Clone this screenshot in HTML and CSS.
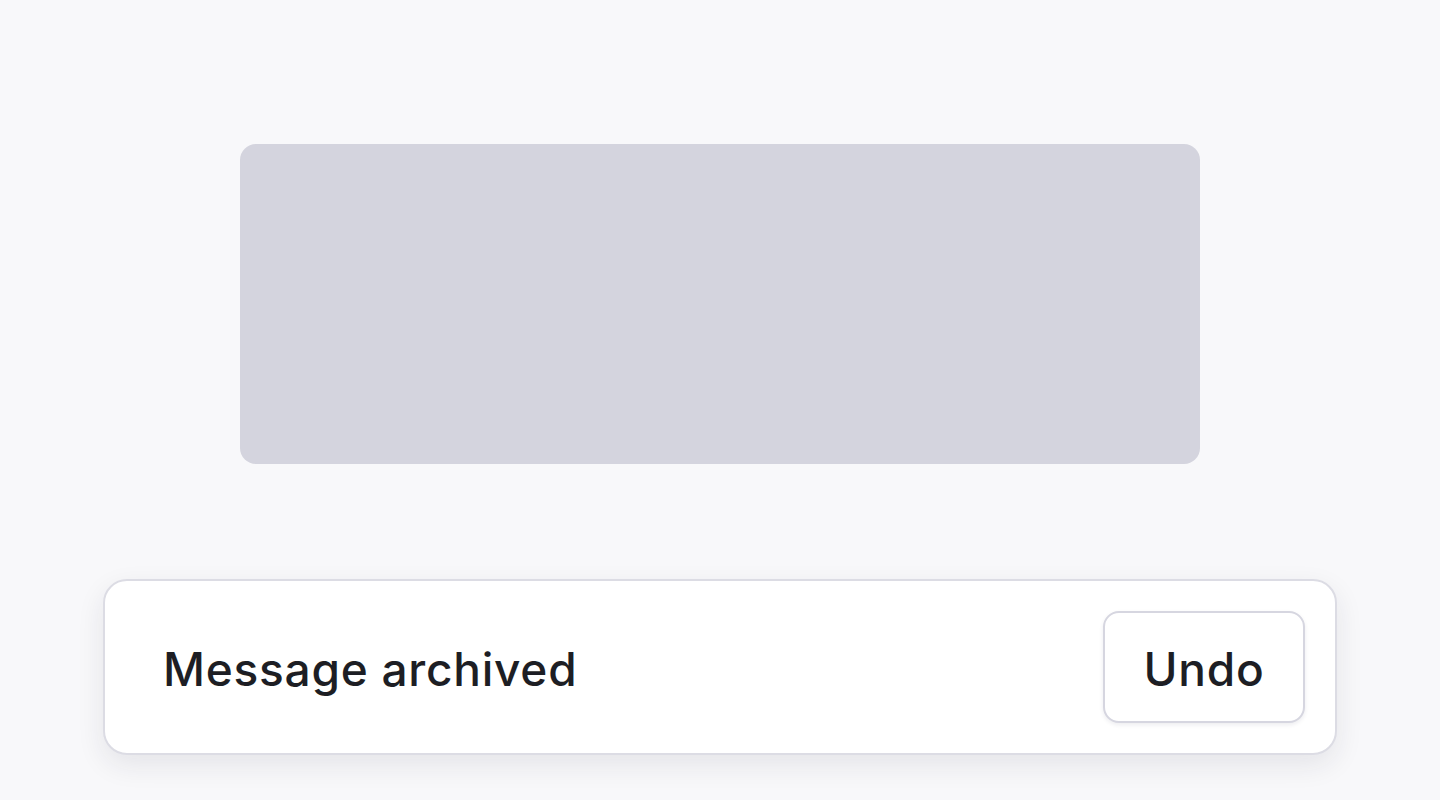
FILE: index.html
```html
<!DOCTYPE html>
<html lang="en">
<head>
<meta charset="utf-8">
<title>Toast</title>
<link rel="stylesheet" href="styles.css">
</head>
<body>
<main class="page">
  <div class="placeholder"></div>
  <div class="toast" role="status">
    <span class="toast-text">Message archived</span>
    <button class="undo" type="button">Undo</button>
  </div>
</main>
</body>
</html>
```
FILE: styles.css
```css
* { box-sizing: border-box; }
html, body {
  margin: 0;
  height: 100%;
  background: #f8f8fa;
  font-family: Inter, "Noto Sans", sans-serif;
}
.page {
  display: flex;
  flex-direction: column;
  align-items: center;
  padding-top: 144px;
}
.placeholder {
  width: 960px;
  height: 320px;
  background: #d4d4de;
  border-radius: 16px;
}
.toast {
  margin-top: 115px;
  width: 1234px;
  height: 176px;
  background: #ffffff;
  border: 2px solid #dcdce4;
  border-radius: 24px;
  box-shadow: 0 10px 28px rgba(30, 30, 60, 0.09);
  display: flex;
  align-items: center;
  justify-content: space-between;
  padding: 30px 30px 30px 58px;
}
.toast-text {
  font-size: 46px;
  font-weight: 500;
  letter-spacing: 0.75px;
  color: #1d1e24;
  line-height: 1;
  padding-top: 4px;
}
.undo {
  width: 202px;
  height: 112px;
  background: #ffffff;
  border: 2px solid #d6d6e0;
  border-radius: 16px;
  box-shadow: 0 2px 4px rgba(30, 30, 60, 0.08);
  font-family: inherit;
  font-size: 46px;
  font-weight: 500;
  letter-spacing: 0.75px;
  color: #1d1e24;
  line-height: 1;
  padding: 4px 0 0;
  cursor: pointer;
}
```
